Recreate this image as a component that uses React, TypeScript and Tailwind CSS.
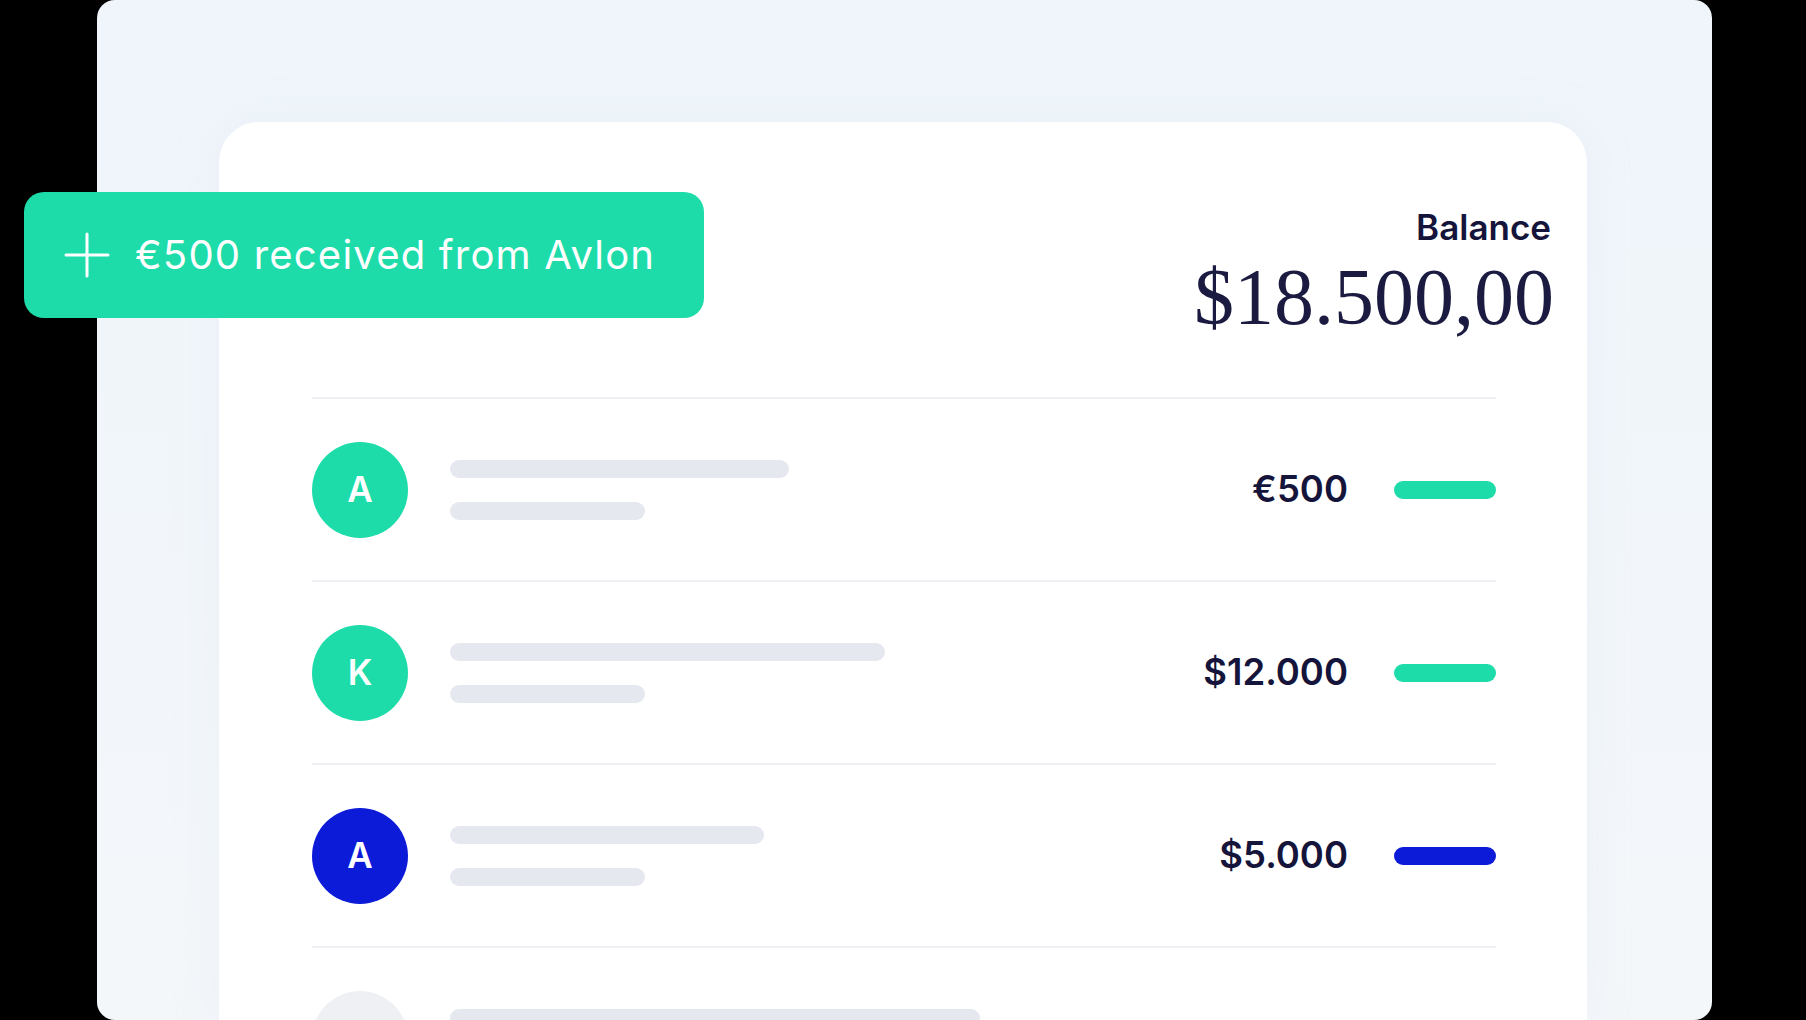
import React from "react";

const rows = [
  { letter: "A", color: "bg-[#1ddcaa]", bar: "bg-[#1ddcaa]", w1: "w-[339px]", amount: "€500" },
  { letter: "K", color: "bg-[#1ddcaa]", bar: "bg-[#1ddcaa]", w1: "w-[435px]", amount: "$12.000" },
  { letter: "A", color: "bg-[#0c1bd8]", bar: "bg-[#0c1bd8]", w1: "w-[314px]", amount: "$5.000" },
  { letter: "", color: "bg-[#eff0f3]", bar: "bg-transparent", w1: "w-[530px]", amount: "" },
];

export default function App() {
  return (
    <div
      className="relative w-[1806px] h-[1020px] overflow-hidden bg-black"
      style={{ fontFamily: "Inter, 'Noto Sans', sans-serif" }}
    >
      <div className="ml-[97px] w-[1615px] h-[1020px] rounded-[18px] bg-gradient-to-b from-[#eff5fb] to-[#f4f7fa] pt-[122px] pl-[122px]">
        <div className="w-[1368px] h-[898px] rounded-t-[40px] bg-white shadow-[0_0_40px_rgba(220,228,240,0.35)]">
          <div className="pt-[88px] pr-[33px] flex flex-col items-end text-[#15143a]">
            <div className="mr-[3px] text-[35px] leading-[35px] font-semibold">Balance</div>
            <div
              className="mt-[12px] text-[80px] leading-[80px] text-[#1b1a40]"
              style={{ fontFamily: "'Liberation Serif', 'DejaVu Serif', serif" }}
            >
              $18.500,00
            </div>
          </div>
          <div className="mt-[60px] ml-[93px] w-[1184px]">
            {rows.map((r, i) => (
              <div key={i} className="border-t-2 border-[#eef0f3] h-[183px] flex items-center">
                <div
                  className={`w-[96px] h-[96px] rounded-full ${r.color} flex items-center justify-center text-white text-[35px] font-semibold shrink-0`}
                >
                  {r.letter}
                </div>
                <div className="ml-[42px] flex flex-col gap-[24px]">
                  <div className={`${r.w1} h-[18px] rounded-full bg-[#e5e8ee]`} />
                  <div className="w-[195px] h-[18px] rounded-full bg-[#e5e8ee]" />
                </div>
                <div className="ml-auto text-[36.5px] font-semibold text-[#15143a]">{r.amount}</div>
                <div className={`ml-[46px] w-[102px] h-[18px] rounded-full ${r.bar}`} />
              </div>
            ))}
          </div>
        </div>
      </div>
      <div className="absolute left-[24px] top-[192px] w-[680px] h-[126px] rounded-[20px] bg-[#1ddcaa] flex items-center pl-[40px] text-white">
        <svg width="46" height="46" viewBox="0 0 46 46" fill="none" stroke="white" strokeWidth="3" strokeLinecap="round">
          <path d="M23 2v42M2 23h42" />
        </svg>
        <span className="ml-[25px] text-[40px] tracking-[1.2px]">€500 received from Avlon</span>
      </div>
    </div>
  );
}
